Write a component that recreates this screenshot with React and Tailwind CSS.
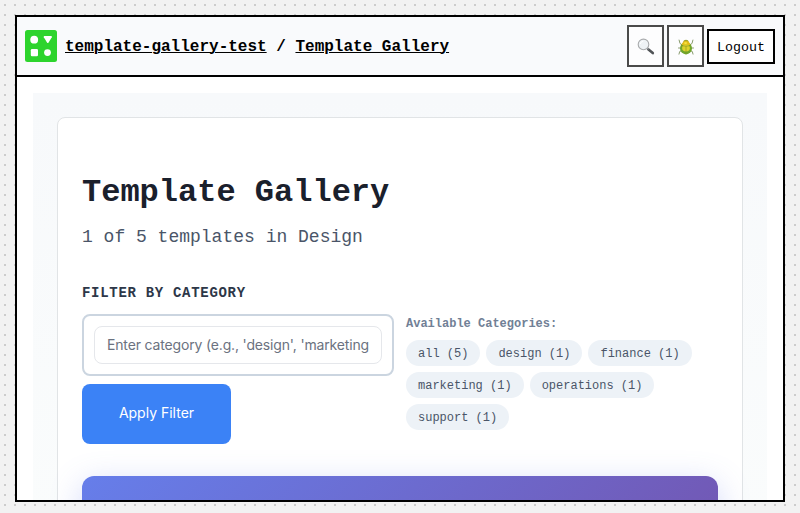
const categories = [
  "all (5)",
  "design (1)",
  "finance (1)",
  "marketing (1)",
  "operations (1)",
  "support (1)",
];

function Logo() {
  return (
    <svg className="h-8 w-8 shrink-0" viewBox="0 0 32 32">
      <rect width="32" height="32" rx="2.5" fill="#2dd42d" />
      <g fill="#fff">
        <circle cx="9.2" cy="9.7" r="3.9" />
        <path d="M19.3 6h7q.9.2.5 1.2l-3.2 5.2q-.8 1-1.6 0l-3.2-5.2q-.4-1 .5-1.2Z" />
        <rect x="5.8" y="19" width="7.2" height="7.2" rx="1.2" />
        <circle cx="22.5" cy="22.6" r="3.4" />
      </g>
    </svg>
  );
}

function SearchIcon() {
  return (
    <svg className="h-[18px] w-[18px]" viewBox="0 0 18 18">
      <path d="M11.2 11.2l4.6 3.9" stroke="#505356" strokeWidth="2.6" strokeLinecap="round" />
      <path d="M10 10l1.6 1.4" stroke="#898d92" strokeWidth="1.4" />
      <circle cx="6.5" cy="6.4" r="5.3" fill="#eef2f5" stroke="#a9abad" strokeWidth="1.1" />
      <path d="M3.3 6a3.2 3.2 0 0 1 3-2.7" fill="none" stroke="#fff" strokeWidth="1" />
    </svg>
  );
}

function BeetleIcon() {
  return (
    <svg className="h-[18px] w-[18px]" viewBox="0 0 18 18">
      <g fill="none" stroke="#8a9c70" strokeWidth="1">
        <path d="M5.5 7L3 5.5 2 1.7M12.5 7L15 5.5 16 1.7M4.5 10H1.1M13.5 10h3.4M5 12.5l-2.3 1-.8 3M13 12.5l2.3 1 .8 3" />
      </g>
      <path d="M6 4.2Q6.6 1.8 9 1.8t3 2.4Z" fill="#a0a52b" />
      <ellipse cx="9" cy="10.3" rx="6" ry="6.1" fill="#70a52c" />
      <path d="M4.7 6.8Q5.3 3 9 3t4.3 3.8Q9 8.2 4.7 6.8Z" fill="#e2bd19" />
      <ellipse cx="9" cy="10" rx="3.9" ry="3.4" fill="#dcd32b" />
      <path d="M4.2 7.6Q9 8.8 13.8 7.6M9 8.2v8" fill="none" stroke="#849122" strokeWidth="0.6" />
      <ellipse cx="8.6" cy="5.1" rx="1.7" ry="0.8" fill="#fbe849" />
    </svg>
  );
}

function IconButton({ label, children }) {
  return (
    <button
      aria-label={label}
      className="flex h-[42px] w-[37px] items-center justify-center border-2 border-[#4a4a4a] bg-[#fdfdfe] pt-0.5"
    >
      {children}
    </button>
  );
}

function Header() {
  return (
    <header className="flex h-[60px] shrink-0 items-center border-b-2 border-black bg-[#f9fafc] px-2 text-black">
      <Logo />
      <div className="ml-2 pt-0.5 text-base font-bold whitespace-pre">
        <a className="underline decoration-1 underline-offset-1">template-gallery-test</a>
        {" / "}
        <a className="underline decoration-1 underline-offset-1">Template Gallery</a>
      </div>
      <div className="ml-auto flex items-center gap-[3px]">
        <IconButton label="Search"><SearchIcon /></IconButton>
        <IconButton label="Debug"><BeetleIcon /></IconButton>
        <button className="h-[35px] w-[68px] border-2 border-black bg-white pt-1 text-[13.333px]">
          Logout
        </button>
      </div>
    </header>
  );
}

function FilterForm() {
  return (
    <div className="w-[312px] shrink-0 font-['Inter',sans-serif] text-sm">
      <div className="h-[62px] rounded-lg border-2 border-[#cbd5e0] bg-white p-2.5">
        <input
          className="block h-[38px] w-full rounded-lg border border-[#e5e7eb] px-3 pb-0.5 text-sm tracking-[-0.16px] placeholder:text-[#6b7280]"
          placeholder="Enter category (e.g., 'design', 'marketing"
        />
      </div>
      <button className="mt-2 h-[60px] w-[149px] rounded-lg bg-[#3b82f6] pb-0.5 text-white">
        Apply Filter
      </button>
    </div>
  );
}

export default function App() {
  return (
    <div className="h-[513px] w-[800px] overflow-hidden bg-[#f2f2f2] bg-[conic-gradient(from_270deg_at_2px_2px,#cccccc_90deg,transparent_90deg)] bg-size-[10px_10px] bg-position-[4px_4px] p-[15px] font-['Liberation_Mono','Courier_New',monospace]">
      <div className="flex h-[487px] w-[770px] flex-col overflow-hidden border-2 border-black bg-white">
        <Header />
        <main className="min-h-0 flex-1 overflow-hidden px-4 pt-4">
          <div className="h-[700px] bg-linear-to-b from-[#f7f9fb] to-[#fcfefd] p-6">
            <section className="h-[800px] rounded-lg border border-[#e1e4e6] bg-white px-6 pt-[54px]">
              <h1 className="text-[32px] leading-[42px] font-bold text-[#1a202c]">Template Gallery</h1>
              <p className="mt-[9px] text-lg leading-[29px] text-[#4a5568]">1 of 5 templates in Design</p>
              <h2 className="mt-[30px] text-sm leading-[22px] font-bold tracking-[0.05em] text-[#2d3748]">
                FILTER BY CATEGORY
              </h2>
              <div className="mt-2.5 flex gap-3">
                <FilterForm />
                <div className="flex-1">
                  <p className="pt-px text-xs leading-[18px] font-bold text-[#718096]">Available Categories:</p>
                  <div className="mt-[7px] flex flex-wrap gap-1.5">
                    {categories.map((category) => (
                      <span key={category} className="h-[26px] rounded-full bg-[#edf2f7] px-3 text-xs leading-[28px] text-[#4a5568]">
                        {category}
                      </span>
                    ))}
                  </div>
                </div>
              </div>
              <div className="mt-8 h-[285px] rounded-xl bg-[linear-gradient(135deg,#667eea,#764ba2)] shadow-[0_8px_32px_rgba(102,126,234,0.3)]" />
            </section>
          </div>
        </main>
      </div>
    </div>
  );
}
